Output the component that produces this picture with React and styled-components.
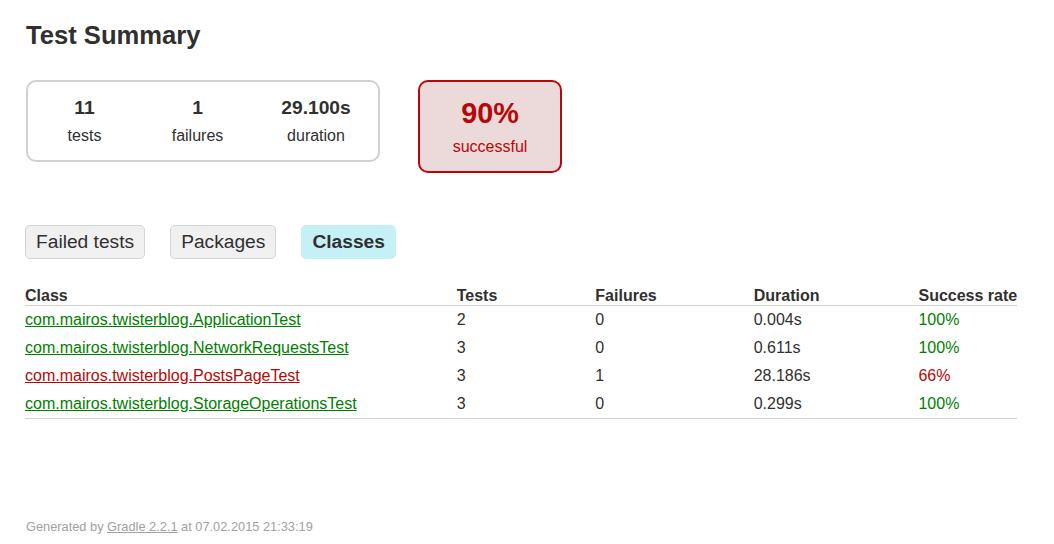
import React from "react";
import styled, { createGlobalStyle } from "styled-components";

const Global = createGlobalStyle`
  html, body { margin: 0; padding: 0; background: #fff; }
  body {
    font-family: "Liberation Sans", Arial, sans-serif;
    font-size: 16px;
    color: #303030;
  }
`;

const Content = styled.div`
  padding: 20px 25px 0 25px;
`;

const Title = styled.h1`
  margin: 1px 0 30px 1px;
  font-size: 25.6px;
  font-weight: bold;
  white-space: nowrap;
`;

const Summary = styled.div`
  display: flex;
  align-items: flex-start;
  margin: 0 0 42px 1px;
`;

const Group = styled.div`
  display: flex;
  border: solid 2px #d0d0d0;
  border-radius: 10px;
`;

const InfoBox = styled.div`
  width: ${(p) => p.$w}px;
  padding: 15px 0;
  text-align: center;
`;

const Counter = styled.div`
  font-size: 19.2px;
  font-weight: bold;
  margin-bottom: 8px;
  line-height: 22px;
`;

const Label = styled.div`
  line-height: 18px;
`;

const Rate = styled.div`
  width: 140px;
  margin-left: 38px;
  padding: 15px 0;
  text-align: center;
  border: solid 2px #b60808;
  border-radius: 10px;
  background: #ecdada;
  color: #b60808;
`;

const Percent = styled.div`
  font-size: 28.8px;
  font-weight: bold;
  line-height: 33px;
  margin-bottom: 8px;
`;

const Tabs = styled.ul`
  display: flex;
  list-style: none;
  margin: 0;
  padding: 10px 0;
  gap: 25px;
`;

const Tab = styled.li`
  padding: 5px 10px;
  border: solid 1px ${(p) => (p.$selected ? "#c5f0f5" : "#d4d4d4")};
  background: ${(p) => (p.$selected ? "#c5f0f5" : "#f0f0f0")};
  border-radius: 5px;
  font-size: 19.2px;
  line-height: 22px;
  font-weight: ${(p) => (p.$selected ? "bold" : "normal")};
  color: #303030;
`;

const Table = styled.table`
  border-collapse: collapse;
  border-bottom: solid #d0d0d0 1px;
  margin-top: 18px;
`;

const Th = styled.th`
  text-align: left;
  white-space: nowrap;
  padding: 0 0 0 ${(p) => p.$pad || 0}px;
  border-bottom: solid #d0d0d0 1px;
  line-height: 18px;
`;

const Td = styled.td`
  white-space: nowrap;
  padding: 5px 0 5px ${(p) => p.$pad || 0}px;
  line-height: 18px;
  color: ${(p) => (p.$color ? p.$color : "#303030")};
`;

const ClassLink = styled.a`
  color: ${(p) => p.$color};
  text-decoration: underline;
`;

const Footer = styled.div`
  margin-top: 100px;
  font-size: 12.8px;
  color: #a0a0a0;
  white-space: nowrap;
  padding-left: 1px;
  a { color: #a0a0a0; }
`;

const GREEN = "#008000";
const RED = "#b60808";

const PADS = [0, 100, 98, 97, 99];

const rows = [
  { name: "com.mairos.twisterblog.ApplicationTest", tests: 2, fail: 0, dur: "0.004s", rate: "100%", ok: true },
  { name: "com.mairos.twisterblog.NetworkRequestsTest", tests: 3, fail: 0, dur: "0.611s", rate: "100%", ok: true },
  { name: "com.mairos.twisterblog.PostsPageTest", tests: 3, fail: 1, dur: "28.186s", rate: "66%", ok: false },
  { name: "com.mairos.twisterblog.StorageOperationsTest", tests: 3, fail: 0, dur: "0.299s", rate: "100%", ok: true },
];

export default function App() {
  return (
    <>
      <Global />
      <Content>
        <Title>Test Summary</Title>
        <Summary>
          <Group>
            <InfoBox $w={113}>
              <Counter>11</Counter>
              <Label>tests</Label>
            </InfoBox>
            <InfoBox $w={113}>
              <Counter>1</Counter>
              <Label>failures</Label>
            </InfoBox>
            <InfoBox $w={124}>
              <Counter>29.100s</Counter>
              <Label>duration</Label>
            </InfoBox>
          </Group>
          <Rate>
            <Percent>90%</Percent>
            <Label>successful</Label>
          </Rate>
        </Summary>
        <Tabs>
          <Tab>Failed tests</Tab>
          <Tab>Packages</Tab>
          <Tab $selected>Classes</Tab>
        </Tabs>
        <Table>
          <thead>
            <tr>
              <Th $pad={PADS[0]}>Class</Th>
              <Th $pad={PADS[1]}>Tests</Th>
              <Th $pad={PADS[2]}>Failures</Th>
              <Th $pad={PADS[3]}>Duration</Th>
              <Th $pad={PADS[4]}>Success rate</Th>
            </tr>
          </thead>
          <tbody>
            {rows.map((r) => (
              <tr key={r.name}>
                <Td $pad={PADS[0]}>
                  <ClassLink href="#" $color={r.ok ? GREEN : RED}>{r.name}</ClassLink>
                </Td>
                <Td $pad={PADS[1]}>{r.tests}</Td>
                <Td $pad={PADS[2]}>{r.fail}</Td>
                <Td $pad={PADS[3]}>{r.dur}</Td>
                <Td $pad={PADS[4]} $color={r.ok ? GREEN : RED}>{r.rate}</Td>
              </tr>
            ))}
          </tbody>
        </Table>
        <Footer>
          Generated by <a href="#">Gradle 2.2.1</a> at 07.02.2015 21:33:19
        </Footer>
      </Content>
    </>
  );
}
